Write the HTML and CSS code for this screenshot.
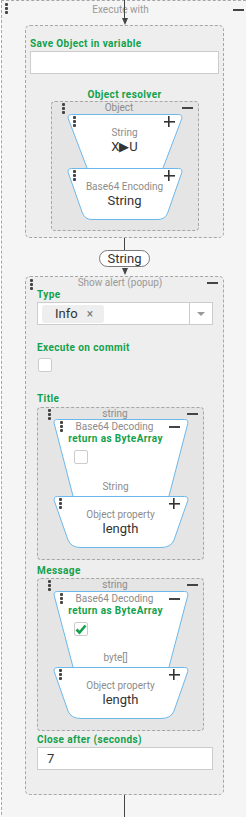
FILE: index.html
```html
<!DOCTYPE html>
<html lang="en">
<head>
  <meta charset="UTF-8" />
  <meta name="viewport" content="width=device-width, initial-scale=1.0"/>
  <title>Execute with</title>
  <link rel="stylesheet" href="styles.css">
</head>
<body>

  <div class="scope">
    <div class="scope-head">
      <span class="dots"></span>
      <span class="head-title">Execute with</span>
      <span class="minus"></span>
    </div>

    <div class="flow">
      <div class="arrow"></div>

      <div class="box box-save">
        <div class="field-label">Save Object in variable</div>
        <div class="text-input"></div>
        <div class="field-label resolver">Object resolver</div>

        <div class="slot slot-object">
          <div class="slot-head">
            <span class="dots"></span>
            <span class="slot-title">Object</span>
            <span class="minus"></span>
          </div>

          <div class="block block-small">
            <svg class="shape" width="116" height="54" viewBox="0 0 116 54">
              <path d="M20,54 L1.2,4.5 Q0.5,0.5 4.5,0.5 H111.5 Q115.5,0.5 114.8,4.5 L96,54" />
            </svg>
            <span class="dots corner-dots"></span>
            <span class="plus"></span>
            <div class="block-type">String</div>
            <div class="block-value">X▶U</div>
          </div>

          <div class="block block-small block-end">
            <svg class="shape" width="116" height="52" viewBox="0 0 116 52">
              <path d="M4.5,0.5 H111.5 Q115.5,0.5 114.8,4.5 L101,44 Q98.5,51.5 91,51.5 H25 Q17.5,51.5 15,44 L1.2,4.5 Q0.5,0.5 4.5,0.5 Z" />
            </svg>
            <span class="dots corner-dots"></span>
            <span class="plus"></span>
            <div class="block-type">Base64 Encoding</div>
            <div class="block-value">String</div>
          </div>
        </div>
      </div>

      <div class="line"></div>
      <div class="pill">String</div>
      <div class="arrow"></div>

      <div class="box box-alert">
        <div class="box-head">
          <span class="dots"></span>
          <span class="head-title">Show alert (popup)</span>
          <span class="minus"></span>
        </div>

        <div class="box-body">
          <div class="field-label">Type</div>
          <div class="select">
            <div class="select-value">
              <span class="chip">Info <span class="chip-x">×</span></span>
            </div>
            <div class="select-toggle"><span class="caret"></span></div>
          </div>

          <div class="field-label gap-commit">Execute on commit</div>
          <div class="checkbox commit-box"></div>

          <div class="field-label gap-title">Title</div>
          <div class="slot slot-text slot-title-field">
            <div class="slot-head">
              <span class="dots"></span>
              <span class="slot-title">string</span>
              <span class="minus"></span>
            </div>

            <div class="block block-decode">
              <svg class="shape" width="136" height="77" viewBox="0 0 136 77">
                <path d="M20,77 L1.2,4.5 Q0.5,0.5 4.5,0.5 H131.5 Q135.5,0.5 134.8,4.5 L116,77" />
              </svg>
              <div class="block-head">
                <span class="dots"></span>
                <span class="block-title">Base64 Decoding</span>
                <span class="minus"></span>
              </div>
              <div class="block-option">return as ByteArray</div>
              <div class="checkbox block-check"></div>
              <div class="block-output">String</div>
            </div>

            <div class="block block-wide block-end">
              <svg class="shape" width="136" height="52" viewBox="0 0 136 52">
                <path d="M4.5,0.5 H131.5 Q135.5,0.5 134.8,4.5 L121,44 Q118,51.5 108,51.5 H28 Q18,51.5 15,44 L1.2,4.5 Q0.5,0.5 4.5,0.5 Z" />
              </svg>
              <span class="dots corner-dots"></span>
              <span class="plus"></span>
              <div class="block-type">Object property</div>
              <div class="block-value">length</div>
            </div>
          </div>

          <div class="field-label gap-message">Message</div>
          <div class="slot slot-text slot-message">
            <div class="slot-head">
              <span class="dots"></span>
              <span class="slot-title">string</span>
              <span class="minus"></span>
            </div>

            <div class="block block-decode block-decode-short">
              <svg class="shape" width="136" height="76" viewBox="0 0 136 76">
                <path d="M20,76 L1.2,4.5 Q0.5,0.5 4.5,0.5 H131.5 Q135.5,0.5 134.8,4.5 L116,76" />
              </svg>
              <div class="block-head">
                <span class="dots"></span>
                <span class="block-title">Base64 Decoding</span>
                <span class="minus"></span>
              </div>
              <div class="block-option">return as ByteArray</div>
              <div class="checkbox block-check checked">
                <svg width="12" height="12" viewBox="0 0 12 12">
                  <path d="M1.5,6.5 L4.5,9.5 L10.5,2.5" />
                </svg>
              </div>
              <div class="block-output">byte[]</div>
            </div>

            <div class="block block-wide block-end">
              <svg class="shape" width="136" height="52" viewBox="0 0 136 52">
                <path d="M4.5,0.5 H131.5 Q135.5,0.5 134.8,4.5 L121,44 Q118,51.5 108,51.5 H28 Q18,51.5 15,44 L1.2,4.5 Q0.5,0.5 4.5,0.5 Z" />
              </svg>
              <span class="dots corner-dots"></span>
              <span class="plus"></span>
              <div class="block-type">Object property</div>
              <div class="block-value">length</div>
            </div>
          </div>

          <div class="field-label gap-close">Close after (seconds)</div>
          <div class="text-input number-input">7</div>
        </div>
      </div>

      <div class="line line-out"></div>
    </div>
  </div>

</body>
</html>
```

FILE: styles.css
```css
:root {
  --scope-bg: #f5f5f5;
  --box-bg: #eeeeee;
  --slot-bg: #e5e5e5;
  --dash: #a6a6a6;
  --green: #12a14b;
  --muted: #8c8c8c;
  --text: #333333;
  --icon: #444444;
  --block-line: #6cb8ea;
}

body {
  margin: 0;
  font-family: Roboto, "Liberation Sans", sans-serif;
  background-color: #ffffff;
  color: var(--text);
  overflow: hidden;
}

.scope {
  width: 250px;
  height: 840px;
  margin-left: 1px;
  box-sizing: border-box;
  border: 1px dashed var(--dash);
  background-color: var(--scope-bg);
}

/* small icons */
.dots {
  display: block;
  width: 3px;
  height: 3px;
  border-radius: 1px;
  background-color: var(--icon);
  box-shadow: 0 4px 0 var(--icon), 0 8px 0 var(--icon);
}

.minus {
  display: block;
  width: 11px;
  height: 2px;
  background-color: var(--icon);
}

.plus {
  display: block;
  width: 11px;
  height: 11px;
  background:
    linear-gradient(var(--text), var(--text)) center / 11px 1.6px no-repeat,
    linear-gradient(var(--text), var(--text)) center / 1.6px 11px no-repeat;
}

/* headers */
.scope-head {
  position: relative;
  display: grid;
  grid-template-columns: 10px 1fr 11px;
  align-items: center;
  height: 17px;
  padding: 0 6px 0 3px;
}

.scope-head::after {
  content: "";
  position: absolute;
  left: 122px;
  top: -1px;
  width: 1px;
  height: 19px;
  background-color: var(--icon);
}

.head-title {
  font-size: 10px;
  line-height: 12px;
  color: #999999;
  text-align: center;
  padding-right: 7px;
}

.scope-head .dots {
  align-self: start;
  margin-top: 2px;
}

.flow {
  width: 199px;
  margin-left: 23px;
  display: flex;
  flex-direction: column;
  align-items: center;
}

.arrow {
  width: 0;
  height: 0;
  border-left: 3.5px solid transparent;
  border-right: 3.5px solid transparent;
  border-top: 7px solid var(--icon);
}

.line {
  width: 1px;
  height: 12px;
  background-color: var(--icon);
}

.line-out {
  height: 30px;
}

.pill {
  box-sizing: border-box;
  width: 51px;
  height: 17px;
  border: 1px solid #7a7a7a;
  border-radius: 9px;
  background-color: #ffffff;
  font-size: 13px;
  line-height: 15px;
  text-align: center;
  color: var(--text);
  margin-bottom: 1px;
}

.box {
  align-self: stretch;
  box-sizing: border-box;
  border: 1px dashed var(--dash);
  border-radius: 5px;
  background-color: var(--box-bg);
}

.box-save {
  padding: 12px 4px 6px;
}

.box-alert {
  margin-top: 1px;
  padding-bottom: 24px;
}

.box-head {
  display: grid;
  grid-template-columns: 10px 1fr 11px;
  align-items: center;
  height: 12px;
  padding: 0 5px 0 4px;
}

.box-head .dots {
  align-self: start;
  margin-top: 2px;
}

.box-body {
  padding: 0 10px 0 11px;
}

.field-label {
  font-size: 10px;
  line-height: 12px;
  font-weight: bold;
  letter-spacing: 0.4px;
  color: var(--green);
}

.resolver {
  margin-top: 15px;
  text-align: center;
}

.gap-commit { margin-top: 17px; }
.gap-title { margin-top: 21px; }
.gap-message { margin-top: 5px; }
.gap-close { margin-top: 3px; }

.text-input {
  box-sizing: border-box;
  height: 23px;
  margin-top: 1px;
  border: 1px solid #cccccc;
  background-color: #ffffff;
}

.number-input {
  font-size: 13px;
  line-height: 21px;
  padding-left: 9px;
}

.select {
  display: flex;
  box-sizing: border-box;
  height: 23px;
  margin-top: 1px;
  border: 1px solid #cccccc;
  background-color: #ffffff;
}

.select-value {
  flex: 1;
  display: flex;
  align-items: center;
  padding-left: 4px;
}

.chip {
  display: inline-flex;
  align-items: center;
  gap: 9px;
  height: 18px;
  width: 62px;
  box-sizing: border-box;
  padding-left: 13px;
  border-radius: 3px;
  background-color: #eeeeee;
  font-size: 13px;
  color: var(--text);
}

.chip-x {
  font-size: 12px;
  color: #777777;
}

.select-toggle {
  width: 22px;
  border-left: 1px solid #cccccc;
  display: flex;
  align-items: center;
  justify-content: center;
}

.caret {
  width: 0;
  height: 0;
  border-left: 4px solid transparent;
  border-right: 4px solid transparent;
  border-top: 4px solid #999999;
}

.checkbox {
  box-sizing: border-box;
  width: 14px;
  height: 14px;
  border: 1px solid #cccccc;
  border-radius: 2px;
  background-color: #ffffff;
}

.commit-box {
  margin-top: 4px;
  margin-left: 1px;
}

/* slots hold the blocks */
.slot {
  box-sizing: border-box;
  border: 1px dashed var(--dash);
  border-radius: 4px;
  background-color: var(--slot-bg);
  display: flex;
  flex-direction: column;
  align-items: center;
}

.slot-object {
  width: 148px;
  margin: 0 auto;
  padding-bottom: 10px;
}

.slot-text {
  width: 167px;
  padding-bottom: 11px;
}

.slot-title-field { margin-top: 2px; }
.slot-message { margin-top: 1px; }

.slot-head {
  align-self: stretch;
  display: grid;
  grid-template-columns: 10px 1fr 11px;
  align-items: center;
  height: 12px;
  padding: 0 5px 0 10px;
}

.slot-title-field .slot-head {
  height: 11px;
}

.slot-head .dots {
  align-self: start;
  margin-top: 1px;
}

.slot-title {
  font-size: 10px;
  line-height: 12px;
  color: var(--muted);
  text-align: center;
  padding-right: 15px;
}

/* blocks */
.block {
  position: relative;
  display: flex;
  flex-direction: column;
  align-items: center;
  box-sizing: border-box;
}

.shape {
  position: absolute;
  left: 0;
  top: 0;
}

.shape path {
  fill: #ffffff;
  stroke: var(--block-line);
  stroke-width: 1;
}

.block > :not(.shape) {
  position: relative;
}

.block-small {
  width: 116px;
  height: 54px;
  padding-top: 13px;
}

.block-small.block-end {
  height: 52px;
}

.block-wide {
  width: 136px;
  height: 52px;
  padding-top: 13px;
}

.block .corner-dots {
  position: absolute;
  left: 6px;
  top: 2px;
}

.block .plus {
  position: absolute;
  right: 8px;
  top: 2px;
}

.block-wide .plus {
  right: 9px;
}

.block-type {
  font-size: 10px;
  line-height: 12px;
  color: var(--muted);
}

.block-value {
  font-size: 13px;
  line-height: 15px;
  color: var(--text);
}

.block-decode {
  width: 136px;
  height: 77px;
  padding: 2px 0 3px;
}

.block-decode-short {
  height: 76px;
}

.block-head {
  align-self: stretch;
  display: grid;
  grid-template-columns: 10px 1fr 11px;
  align-items: center;
  height: 12px;
  padding: 0 9px 0 7px;
}

.block-head .dots {
  align-self: start;
}

.block-title {
  font-size: 10px;
  line-height: 12px;
  color: var(--muted);
  text-align: center;
  padding-right: 9px;
}

.block-option {
  font-size: 10px;
  line-height: 12px;
  font-weight: bold;
  letter-spacing: 0.4px;
  color: var(--green);
  padding-right: 10px;
}

.block-check {
  align-self: flex-start;
  margin: 5px 0 0 21px;
}

.block-check.checked {
  display: flex;
  align-items: center;
  justify-content: center;
}

.block-check svg path {
  fill: none;
  stroke: var(--green);
  stroke-width: 2.6;
}

.block-output {
  margin-top: auto;
  font-size: 10px;
  line-height: 12px;
  color: var(--muted);
  padding-right: 10px;
}
```
